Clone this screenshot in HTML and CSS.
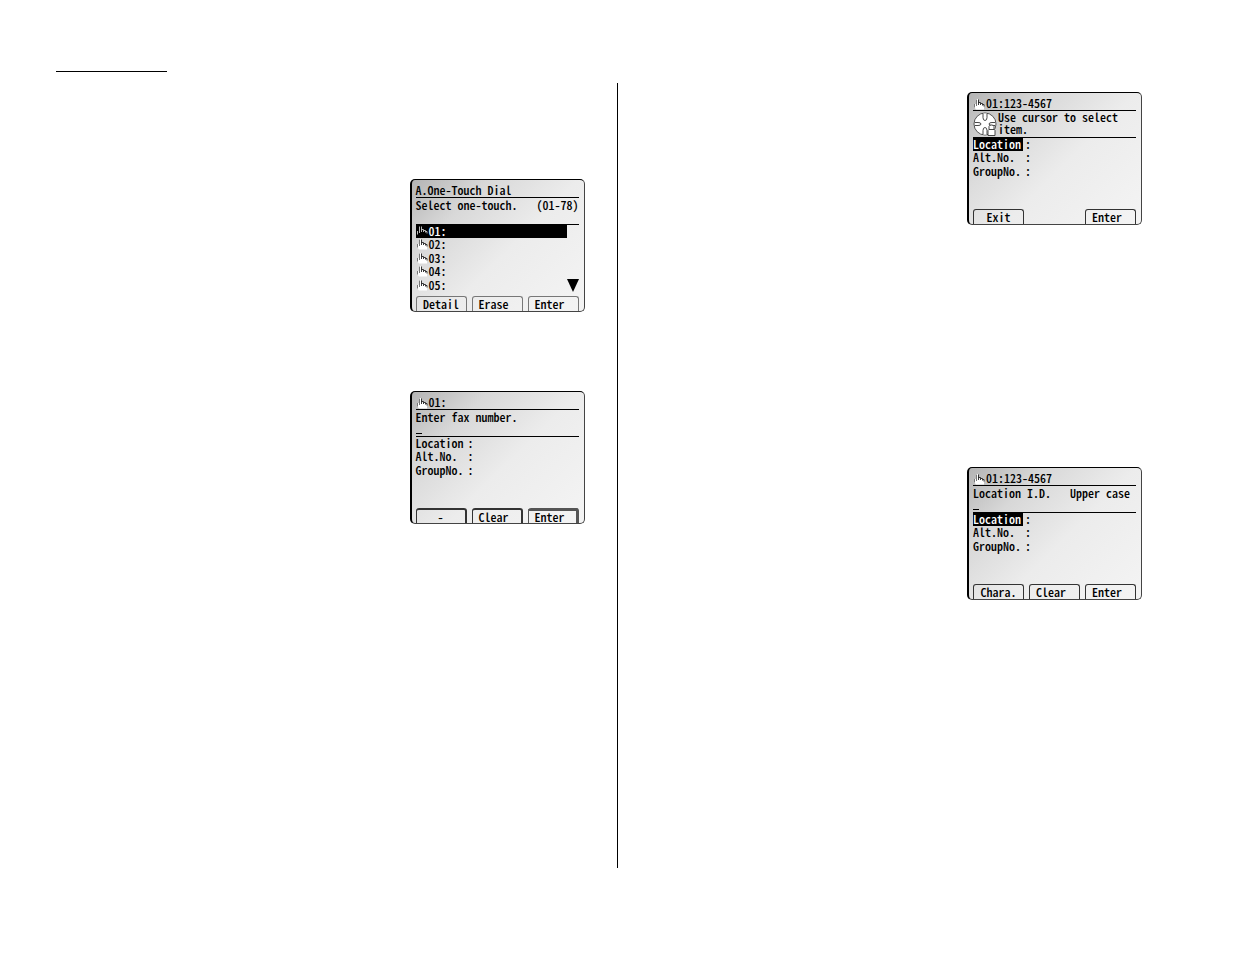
FILE: index.html
```html
<!DOCTYPE html>
<html lang="en">
<head>
<meta charset="utf-8">
<title>One-Touch Dial</title>
<link rel="stylesheet" href="styles.css">
</head>
<body>
<svg class="defs" aria-hidden="true">
  <symbol id="hand" viewBox="0 0 12 12">
    <path class="hand-fill" d="M3 1h2v4l6 1v5.500H3L1 9V6h2z"/>
    <path class="hand-edge" d="M1.500 9.500V6M3.500 8V1.500"/>
    <path class="hand-line" d="M5.500 1.500V7M5.500 4.500h2V7M8 5.500h1.500v2M10 6.500h1v2"/>
  </symbol>
  <symbol id="pad" viewBox="0 0 25 25">
    <circle cx="12" cy="12.500" r="11" fill="#fff" stroke="#444" stroke-width=".9"/>
    <g fill="#fff" stroke="#333" stroke-width=".9">
      <path d="M10 2v4q0 3 2 3t2-3V2M2 11h3q3 0 3 1.500T5 14H2M22 11h-3q-3 0-3 1.500t3 1.500h3M10 23v-4q0-3 2-3t2 3v4"/>
      <path d="M15 24v-5l1-1v-3q0-1.500 2.500-1.500T21 15v3l1 1v5z"/>
      <path d="M16 18h5"/>
    </g>
  </symbol>
</svg>
<header class="header"><div class="header-rule"></div></header>
<main class="page">
  <section class="column column-left">
    <article class="screen">
      <h2 class="title">A.One-Touch Dial</h2>
      <div class="message"><p class="line"><span>Select one-touch.</span><span>(01-78)</span></p></div>
      <ul class="rows">
        <li class="row selected"><svg class="hand"><use href="#hand"/></svg>01:</li>
        <li class="row"><svg class="hand"><use href="#hand"/></svg>02:</li>
        <li class="row"><svg class="hand"><use href="#hand"/></svg>03:</li>
        <li class="row"><svg class="hand"><use href="#hand"/></svg>04:</li>
        <li class="row"><svg class="hand"><use href="#hand"/></svg>05:<span class="more"></span></li>
      </ul>
      <div class="keys"><button class="key">Detail</button><button class="key">Erase</button><button class="key">Enter</button></div>
    </article>
    <article class="screen">
      <h2 class="title"><svg class="hand"><use href="#hand"/></svg>01:</h2>
      <div class="message"><label class="line" for="fax">Enter fax number.</label><input class="entry" id="fax"></div>
      <ul class="rows">
        <li class="row"><span class="name">Location</span>:</li>
        <li class="row"><span class="name">Alt.No.</span>:</li>
        <li class="row"><span class="name">GroupNo.</span>:</li>
      </ul>
      <div class="keys"><button class="key raised">-</button><button class="key raised">Clear</button><button class="key raised strong">Enter</button></div>
    </article>
  </section>
  <section class="column column-right">
    <article class="screen">
      <h2 class="title"><svg class="hand"><use href="#hand"/></svg>01:123-4567</h2>
      <div class="message with-pad"><svg class="pad"><use href="#pad"/></svg><p class="help">Use cursor to select item.</p></div>
      <ul class="rows">
        <li class="row"><span class="name selected">Location</span>:</li>
        <li class="row"><span class="name">Alt.No.</span>:</li>
        <li class="row"><span class="name">GroupNo.</span>:</li>
      </ul>
      <div class="keys"><button class="key dark">Exit</button><button class="key dark last">Enter</button></div>
    </article>
    <article class="screen">
      <h2 class="title"><svg class="hand"><use href="#hand"/></svg>01:123-4567</h2>
      <div class="message"><label class="line inset" for="location"><span>Location I.D.</span><span>Upper case</span></label><input class="entry" id="location"></div>
      <ul class="rows">
        <li class="row"><span class="name selected">Location</span>:</li>
        <li class="row"><span class="name">Alt.No.</span>:</li>
        <li class="row"><span class="name">GroupNo.</span>:</li>
      </ul>
      <div class="keys"><button class="key dark">Chara.</button><button class="key dark">Clear</button><button class="key dark">Enter</button></div>
    </article>
  </section>
</main>
</body>
</html>
```
FILE: styles.css
```css
* { box-sizing: border-box; }
body {
  margin: 0;
  min-height: 100vh;
  display: flex;
  flex-direction: column;
  background: #fff;
  color: #000;
}
.defs { position: absolute; width: 0; height: 0; }
.header { padding: 71px 56px 11px; }
.header-rule { width: 111px; border-top: 1px solid #000; }
.page {
  flex: 1;
  display: grid;
  grid-template-columns: 1fr 1fr;
  margin-bottom: 86px;
}
.column {
  display: flex;
  flex-direction: column;
  align-items: flex-end;
}
.column-left { padding: 96px 32px 0 56px; gap: 79px; border-right: 1px solid #000; }
.column-right { padding: 9px 93px 0 32px; gap: 242px; }
.screen {
  --hand-fill: #fff;
  --hand-edge: #777;
  --hand-line: #222;
  width: 175px;
  display: flex;
  flex-direction: column;
  padding: 5px 5px 0 4px;
  border: 1px solid #444;
  border-left: 2px solid #000;
  border-top-color: #000;
  border-radius: 5px;
  background: linear-gradient(135deg, #b4b4b4 0%, #d8d8d8 25%, #ececec 55%, #f4f4f4 100%);
  font: 500 12px/12px "Noto Sans CJK JP", "Liberation Mono", monospace;
  font-feature-settings: "hwid";
}
.title {
  display: flex;
  margin: 0;
  height: 13px;
  border-bottom: 1px solid #000;
  font: inherit;
  line-height: 10px;
}
.message {
  display: flex;
  flex-direction: column;
  height: 27px;
  border-bottom: 1px solid #000;
}
.line { display: flex; justify-content: space-between; margin: 0; line-height: 13px; white-space: nowrap; }
.inset { padding-right: 6px; }
.entry {
  width: 100%;
  height: 13px;
  padding: 0;
  border: 0;
  background: linear-gradient(#000, #000) 0 10px / 6px 1px no-repeat;
  color: inherit;
  font: inherit;
  font-feature-settings: inherit;
}
.with-pad { flex-direction: row; }
.pad { flex: none; width: 25px; height: 26px; }
.help { margin: 0; width: 132px; line-height: 12px; }
.rows {
  display: grid;
  grid-template-rows: repeat(5, 1fr);
  height: 67px;
  margin: 0;
  padding: 0;
  list-style: none;
}
.row { display: flex; align-items: flex-start; line-height: 11px; }
.row.selected { margin-right: 12px; --hand-fill: #000; --hand-edge: #bbb; --hand-line: #ccc; }
.selected { background: #000; color: #fff; }
.name { width: 50px; height: 13px; margin-right: 2px; }
.hand { flex: none; width: 12px; height: 12px; margin-right: 1px; fill: none; }
.hand-fill { fill: var(--hand-fill); }
.hand-edge { stroke: var(--hand-edge); }
.hand-line { stroke: var(--hand-line); stroke-width: .9; }
.more {
  margin-left: auto;
  border: 6px solid transparent;
  border-top: 13px solid #000;
  border-bottom: 0;
}
.keys {
  display: grid;
  grid-template-columns: repeat(3, 1fr);
  gap: 5px;
  margin-top: 4px;
}
.key {
  height: 15px;
  padding: 0;
  border: 1px solid #777;
  border-bottom: 0;
  border-radius: 3px 3px 0 0;
  background: none;
  color: inherit;
  font: inherit;
  font-feature-settings: inherit;
}
.key + .key { padding-left: 6px; text-align: left; }
.dark { border-color: #333; }
.raised { border-color: #333; border-right-width: 2px; border-top-width: 2px; }
.strong { border-color: #555; border-right-width: 3px; border-top-width: 3px; }
.last { grid-column: 3; }
```
